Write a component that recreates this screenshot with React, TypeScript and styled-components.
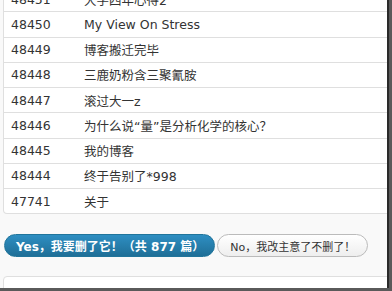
import styled, { createGlobalStyle } from 'styled-components';

const GlobalStyle = createGlobalStyle`
    html, body {
        margin: 0;
        padding: 0;
        background: #ffffff;
    }
`;

const posts = [
    { id: 48451, title: '大学四年心得2' },
    { id: 48450, title: 'My View On Stress' },
    { id: 48449, title: '博客搬迁完毕' },
    { id: 48448, title: '三鹿奶粉含三聚氰胺' },
    { id: 48447, title: '滚过大一z' },
    { id: 48446, title: '为什么说“量”是分析化学的核心？' },
    { id: 48445, title: '我的博客' },
    { id: 48444, title: '终于告别了*998' },
    { id: 47741, title: '关于' },
];

const App = () => (
    <>
        <GlobalStyle />
        <Screen>
            <Frame>
                <PostTable>
                    { posts.map((post) => (
                        <Row key={post.id}>
                            <IdCell>{ post.id }</IdCell>
                            <TitleCell>{ post.title }</TitleCell>
                        </Row>
                    )) }
                </PostTable>
                <Actions>
                    <ConfirmButton type="button">Yes，我要删了它！（共 877 篇）</ConfirmButton>
                    <CancelButton type="button">No，我改主意了不删了！</CancelButton>
                </Actions>
                <NextCard />
            </Frame>
        </Screen>
    </>
);

// the screenshot's own window edge: a dark band right and bottom
const Screen = styled.div`
    width: 392px;
    height: 291px;
    box-sizing: border-box;
    border-right: 3px solid #5a5a5a;
    border-bottom: 3px solid #5a5a5a;
    overflow: hidden;
`;

const Frame = styled.div`
    height: 100%;
    overflow: hidden;
    background: #f9f9f9;
    border-right: 2px solid #2a2a2a;
    border-bottom: 2px solid #2a2a2a;
    font-family: 'DejaVu Sans', Verdana, 'Noto Sans CJK SC', sans-serif;
`;

const PostTable = styled.div`
    margin: -13px -6px 0 3px;
    background: #ffffff;
    border: 1px solid #dfdfdf;
    border-top: none;
    border-radius: 0 0 4px 4px;
`;

const Row = styled.div`
    display: grid;
    grid-template-columns: 80px 1fr;
    align-items: center;
    height: 25.25px;
    box-sizing: border-box;
    border-bottom: 1px solid #dfdfdf;
    font-size: 12.5px;
    color: #333;

    &:last-child {
        border-bottom: none;
        height: 24.25px;
    }
`;

const IdCell = styled.div`
    padding-left: 7px;
`;

const TitleCell = styled.div`
    white-space: nowrap;
`;

const Actions = styled.div`
    display: flex;
    gap: 2px;
    padding: 20px 0 0 4px;
    height: 23px;
    margin-bottom: 19px;
`;

const ConfirmButton = styled.button`
    height: 23px;
    padding: 0 10px 0 11px;
    border: 1px solid #21759b;
    border-radius: 12px;
    background: linear-gradient(to bottom, #2e8ec2, #1f6f97);
    color: #ffffff;
    font-family: 'DejaVu Sans', Verdana, 'Noto Sans CJK SC', sans-serif;
    font-size: 12px;
    font-weight: bold;
    white-space: nowrap;
`;

const CancelButton = styled.button`
    height: 23px;
    padding: 0 12px 0 12px;
    border: 1px solid #bbbbbb;
    border-radius: 12px;
    background: linear-gradient(to bottom, #ffffff, #eeeeee);
    color: #333;
    font-family: 'DejaVu Sans', Verdana, 'Noto Sans CJK SC', sans-serif;
    font-size: 11px;
    white-space: nowrap;
`;

const NextCard = styled.div`
    margin: 0 -6px 0 3px;
    height: 30px;
    background: #ffffff;
    border: 1px solid #dfdfdf;
    border-radius: 4px 4px 0 0;
`;

export default App;
